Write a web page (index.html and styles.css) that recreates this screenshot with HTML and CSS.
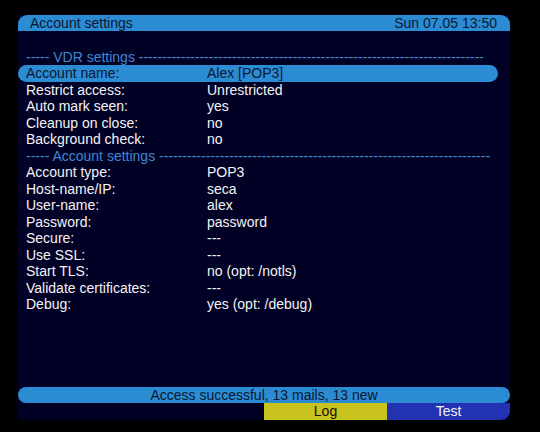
FILE: index.html
```html
<!DOCTYPE html>
<html>
<head>
<meta charset="utf-8">
<link rel="stylesheet" href="styles.css">
</head>
<body>
<div class="osd">
  <div class="title">
    <span>Account settings</span>
    <span>Sun 07.05 13:50</span>
  </div>
  <div class="list">
    <div class="sep">----- VDR settings --------------------------------------------------------------------------</div>
    <div class="row sel"><span class="lbl">Account name:</span><span>Alex [POP3]</span></div>
    <div class="row"><span class="lbl">Restrict access:</span><span>Unrestricted</span></div>
    <div class="row"><span class="lbl">Auto mark seen:</span><span>yes</span></div>
    <div class="row"><span class="lbl">Cleanup on close:</span><span>no</span></div>
    <div class="row"><span class="lbl">Background check:</span><span>no</span></div>
    <div class="sep">----- Account settings -----------------------------------------------------------------------</div>
    <div class="row"><span class="lbl">Account type:</span><span>POP3</span></div>
    <div class="row"><span class="lbl">Host-name/IP:</span><span>seca</span></div>
    <div class="row"><span class="lbl">User-name:</span><span>alex</span></div>
    <div class="row"><span class="lbl">Password:</span><span>password</span></div>
    <div class="row"><span class="lbl">Secure:</span><span>---</span></div>
    <div class="row"><span class="lbl">Use SSL:</span><span>---</span></div>
    <div class="row"><span class="lbl">Start TLS:</span><span>no (opt: /notls)</span></div>
    <div class="row"><span class="lbl">Validate certificates:</span><span>---</span></div>
    <div class="row"><span class="lbl">Debug:</span><span>yes (opt: /debug)</span></div>
  </div>
  <div class="status">Access successful, 13 mails, 13 new</div>
  <div class="buttons">
    <div class="btn"></div>
    <div class="btn"></div>
    <div class="btn yellow">Log</div>
    <div class="btn blue">Test</div>
  </div>
</div>
</body>
</html>
```
FILE: styles.css
```css
html, body {
  margin: 0;
  padding: 0;
  background: #000;
}
body {
  width: 540px;
  height: 432px;
  overflow: hidden;
  font-family: "Liberation Sans", Arial, sans-serif;
  font-size: 14px;
}
.osd {
  margin: 15px 0 0 18px;
  width: 492px;
  height: 405px;
  background: #010125;
  display: flex;
  flex-direction: column;
}
.title {
  height: 16px;
  line-height: 16px;
  background: #2b8bd3;
  color: #0b1830;
  border-radius: 9px 9px 0 0;
  display: flex;
  justify-content: space-between;
  padding: 0 13px 0 12px;
}
.list {
  margin-top: 17.5px;
  flex: 1;
}
.row, .sep {
  height: 16.5px;
  line-height: 16.5px;
  width: 480px;
  padding-left: 8px;
  box-sizing: border-box;
  display: flex;
  color: #f4f4f4;
  white-space: nowrap;
}
.sep {
  color: #4088d0;
}
.lbl {
  width: 181px;
  flex: none;
}
.sel {
  background: #2b8bd3;
  color: #0b1830;
  border-radius: 8.5px;
}
.status {
  height: 16px;
  line-height: 16px;
  background: #2b8bd3;
  color: #0b1830;
  border-radius: 8px;
  text-align: center;
}
.buttons {
  display: flex;
  height: 17px;
}
.btn {
  flex: 1;
  line-height: 17px;
  text-align: center;
}
.yellow {
  background: #c9c31f;
  color: #10100a;
}
.blue {
  background: #2232b2;
  color: #f4f4f4;
  border-radius: 0 0 9px 0;
}
```
